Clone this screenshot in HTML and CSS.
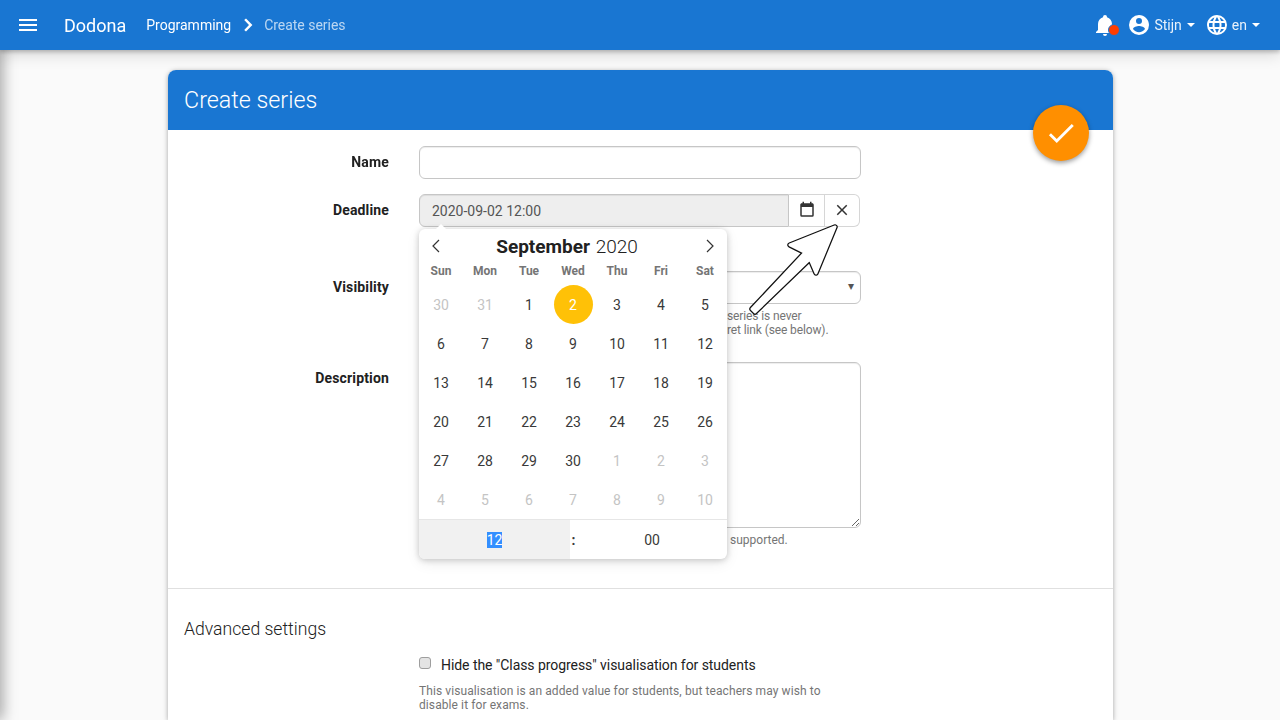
FILE: index.html
```html
<!DOCTYPE html>
<html lang="en">
<head>
  <meta charset="UTF-8">
  <title>Create series</title>
  <link rel="stylesheet" href="styles.css">
</head>
<body>

  <div class="drawer-edge"></div>

  <header class="navbar">
    <svg class="icon nav-menu" viewBox="0 0 24 24"><path d="M3,6H21V8H3V6M3,11H21V13H3V11M3,16H21V18H3V16Z"/></svg>
    <span class="brand">Dodona</span>
    <span class="crumb">Programming</span>
    <svg class="icon crumb-sep" viewBox="0 0 24 24"><path d="M8.2,16.9L13,12L8.2,7.1L10,5.6L16.4,12L10,18.4L8.2,16.9Z"/></svg>
    <span class="crumb crumb-active">Create series</span>

    <div class="nav-right">
      <div class="bell">
        <svg class="icon" viewBox="0 0 24 24"><path d="M21,19V20H3V19L5,17V11C5,7.9 7.03,5.17 10,4.29C10,4.19 10,4.1 10,4A2,2 0 0,1 12,2A2,2 0 0,1 14,4C14,4.1 14,4.19 14,4.29C16.97,5.17 19,7.9 19,11V17L21,19M14,21A2,2 0 0,1 12,23A2,2 0 0,1 10,21"/></svg>
        <span class="bell-dot"></span>
      </div>
      <div class="nav-item">
        <svg class="icon" viewBox="0 0 24 24"><path d="M12,19.2C9.5,19.2 7.29,17.92 6,16C6.03,14 10,12.9 12,12.9C14,12.9 17.97,14 18,16C16.71,17.92 14.5,19.2 12,19.2M12,5A3,3 0 0,1 15,8A3,3 0 0,1 12,11A3,3 0 0,1 9,8A3,3 0 0,1 12,5M12,2A10,10 0 0,0 2,12A10,10 0 0,0 12,22A10,10 0 0,0 22,12C22,6.47 17.5,2 12,2Z"/></svg>
        <span>Stijn</span><i class="caret"></i>
      </div>
      <div class="nav-item">
        <svg class="icon" viewBox="0 0 24 24"><path d="M16.36,14C16.44,13.34 16.5,12.68 16.5,12C16.5,11.32 16.44,10.66 16.36,10H19.74C19.9,10.64 20,11.31 20,12C20,12.69 19.9,13.36 19.74,14M14.59,19.56C15.19,18.45 15.65,17.25 15.97,16H18.92C17.96,17.65 16.43,18.93 14.59,19.56M14.34,14H9.66C9.56,13.34 9.5,12.68 9.5,12C9.5,11.32 9.56,10.65 9.66,10H14.34C14.43,10.65 14.5,11.32 14.5,12C14.5,12.68 14.43,13.34 14.34,14M12,19.96C11.17,18.76 10.5,17.43 10.09,16H13.91C13.5,17.43 12.83,18.76 12,19.96M8,8H5.08C6.03,6.34 7.57,5.06 9.4,4.44C8.8,5.55 8.35,6.75 8,8M5.08,16H8C8.35,17.25 8.8,18.45 9.4,19.56C7.57,18.93 6.03,17.65 5.08,16M4.26,14C4.1,13.36 4,12.69 4,12C4,11.31 4.1,10.64 4.26,10H7.64C7.56,10.66 7.5,11.32 7.5,12C7.5,12.68 7.56,13.34 7.64,14M12,4.03C12.83,5.23 13.5,6.57 13.91,8H10.09C10.5,6.57 11.17,5.23 12,4.03M18.92,8H15.97C15.65,6.75 15.19,5.55 14.59,4.44C16.43,5.07 17.96,6.34 18.92,8M12,2C6.47,2 2,6.5 2,12A10,10 0 0,0 12,22A10,10 0 0,0 22,12A10,10 0 0,0 12,2Z"/></svg>
        <span>en</span><i class="caret"></i>
      </div>
    </div>
  </header>

  <main class="card">
    <div class="card-title">
      <h1>Create series</h1>
      <button class="fab" type="button">
        <svg class="icon" viewBox="0 0 24 24"><path d="M21,7L9,19L3.5,13.5L4.91,12.09L9,16.17L19.59,5.59L21,7Z"/></svg>
      </button>
    </div>

    <form class="form">
      <div class="row row-name">
        <label>Name</label>
        <input class="control" type="text">
      </div>

      <div class="row row-deadline">
        <label>Deadline</label>
        <div class="input-group">
          <input class="control date-input" type="text" value="2020-09-02 12:00" readonly>
          <button class="group-btn" type="button">
            <svg class="icon" viewBox="0 0 24 24"><path d="M19,19H5V8H19M16,1V3H8V1H6V3H5C3.89,3 3,3.89 3,5V19A2,2 0 0,0 5,21H19A2,2 0 0,0 21,19V5C21,3.89 20.1,3 19,3H18V1"/></svg>
          </button>
          <button class="group-btn" type="button">
            <svg class="icon" viewBox="0 0 24 24"><path d="M19,6.41L17.59,5L12,10.59L6.41,5L5,6.41L10.59,12L5,17.59L6.41,19L12,13.41L17.59,19L19,17.59L13.41,12L19,6.41Z"/></svg>
          </button>
        </div>

        <div class="calendar">
          <div class="cal-month">
            <svg class="cal-nav" viewBox="0 0 10 16"><path d="M8 2 2 8l6 6"/></svg>
            <div class="cal-title"><b>September</b> <span>2020</span></div>
            <svg class="cal-nav" viewBox="0 0 10 16"><path d="M2 2l6 6-6 6"/></svg>
          </div>
          <div class="cal-week">
            <span>Sun</span><span>Mon</span><span>Tue</span><span>Wed</span><span>Thu</span><span>Fri</span><span>Sat</span>
          </div>
          <div class="cal-days">
            <span class="off">30</span><span class="off">31</span><span>1</span><span class="picked">2</span><span>3</span><span>4</span><span>5</span>
            <span>6</span><span>7</span><span>8</span><span>9</span><span>10</span><span>11</span><span>12</span>
            <span>13</span><span>14</span><span>15</span><span>16</span><span>17</span><span>18</span><span>19</span>
            <span>20</span><span>21</span><span>22</span><span>23</span><span>24</span><span>25</span><span>26</span>
            <span>27</span><span>28</span><span>29</span><span>30</span><span class="off">1</span><span class="off">2</span><span class="off">3</span>
            <span class="off">4</span><span class="off">5</span><span class="off">6</span><span class="off">7</span><span class="off">8</span><span class="off">9</span><span class="off">10</span>
          </div>
          <div class="cal-time">
            <div class="time-hour"><span class="selected">12</span></div>
            <div class="time-sep">:</div>
            <div class="time-min">00</div>
          </div>
        </div>
      </div>

      <div class="row row-visibility">
        <label>Visibility</label>
        <div class="field">
          <div class="control select-box"><span class="select-arrow">▾</span></div>
          <p class="help help-covered">series is never<br>ret link (see below).</p>
        </div>
      </div>

      <div class="row row-description">
        <label>Description</label>
        <div class="field">
          <textarea class="control description"></textarea>
          <p class="help help-supported">supported.</p>
        </div>
      </div>

      <hr class="divider">

      <h2>Advanced settings</h2>

      <div class="row">
        <span class="row-spacer"></span>
        <div class="field">
          <label class="check-label"><input type="checkbox">Hide the "Class progress" visualisation for students</label>
          <p class="help help-check">This visualisation is an added value for students, but teachers may wish to disable it for exams.</p>
        </div>
      </div>
    </form>
  </main>

  <svg class="pointer" viewBox="0 0 100 100">
    <polygon class="pointer-edge" points="87,5 42,23 57,30.5 4,87 7,90 62,37 68,51"/>
    <polygon class="pointer-fill" points="87,5 42,23 57,30.5 4,87 7,90 62,37 68,51"/>
  </svg>

</body>
</html>
```

FILE: styles.css
```css
* {
  box-sizing: border-box;
}

html, body {
  height: 720px;
  overflow: hidden;
}

body {
  margin: 0;
  background: #fafafa;
  color: #212121;
  font-family: Roboto, Arial, sans-serif;
  font-size: 14px;
}

.icon {
  display: block;
  fill: currentColor;
}

.drawer-edge {
  position: fixed;
  top: 0;
  left: -10px;
  width: 10px;
  height: 720px;
  box-shadow: 0 0 16px rgba(0,0,0,0.55);
}

.navbar {
  position: relative;
  display: flex;
  align-items: center;
  height: 50px;
  padding: 0 20px 0 16px;
  background: #1976d2;
  color: white;
  box-shadow: 0 2px 4px rgba(0,0,0,0.22), 0 4px 16px rgba(0,0,0,0.16);
}

.nav-menu {
  width: 24px;
  height: 24px;
}

.brand {
  margin-left: 24px;
  font-size: 18px;
}

.crumb {
  margin-left: 20px;
  font-size: 14px;
}

.crumb-sep {
  width: 24px;
  height: 24px;
  margin: 0 4px 0 5px;
}

.crumb-active {
  margin-left: 0;
  color: rgba(255,255,255,0.7);
  letter-spacing: -0.03px;
}

.nav-right {
  display: flex;
  align-items: center;
  margin-left: auto;
  gap: 10px;
}

.bell {
  position: relative;
}

.bell .icon {
  width: 24px;
  height: 24px;
}

.bell-dot {
  position: absolute;
  right: -3px;
  bottom: 1px;
  width: 12px;
  height: 12px;
  border-radius: 50%;
  background: #ff3d00;
  border: 1px solid #1976d2;
}

.nav-item {
  display: flex;
  align-items: center;
  color: rgba(255,255,255,0.9);
}

.nav-item .icon {
  width: 24px;
  height: 24px;
  margin-right: 3px;
  color: white;
}

.caret {
  width: 0;
  height: 0;
  margin-left: 5px;
  border: 4px solid transparent;
  border-top-color: white;
  border-bottom: 0;
}

.card {
  width: 945px;
  height: 650px;
  margin: 20px 0 0 168px;
  background: white;
  border-radius: 8px 8px 0 0;
  box-shadow: 0 1px 5px rgba(0,0,0,0.35);
}

.card-title {
  position: relative;
  height: 60px;
  padding: 0 16px;
  background: #1976d2;
  border-radius: 8px 8px 0 0;
  color: white;
}

h1 {
  margin: 0;
  font-size: 23.3px;
  font-weight: 300;
  line-height: 60px;
}

.fab {
  position: absolute;
  top: 35px;
  right: 24px;
  width: 56px;
  height: 56px;
  padding: 11px;
  border: none;
  border-radius: 50%;
  background: #ff8f00;
  color: white;
  box-shadow: 0 2px 5px rgba(0,0,0,0.4);
}

.fab .icon {
  width: 34px;
  height: 34px;
}

.form {
  padding-top: 16px;
}

.row {
  position: relative;
  display: flex;
}

.row > label, .row-spacer {
  flex: none;
  width: 221px;
  margin-right: 30px;
  padding-top: 8px;
  font-weight: 700;
  text-align: right;
  line-height: 17px;
  letter-spacing: 0.15px;
}

.row-deadline {
  margin-top: 15px;
}

.row-visibility {
  margin-top: 44px;
}

.row-description {
  margin-top: 25px;
}

.field {
  width: 442px;
}

.control {
  display: block;
  width: 442px;
  height: 33px;
  padding: 0 12px;
  border: 1px solid #c6c6c6;
  border-radius: 6px;
  background: white;
  color: #555;
  font-family: inherit;
  font-size: 14px;
  box-shadow: inset 0 1px 1px rgba(0,0,0,0.075);
}

.input-group {
  display: flex;
  width: 441px;
  height: 33px;
}

.date-input {
  flex: 1;
  width: auto;
  border-radius: 6px 0 0 6px;
  background: #eeeeee;
}

.group-btn {
  width: 36px;
  padding: 0;
  border: 1px solid #d6d6d6;
  border-left: none;
  background: white;
  color: #333;
}

.group-btn:last-child {
  width: 35px;
  border-radius: 0 6px 6px 0;
}

.group-btn .icon {
  width: 18px;
  height: 18px;
  margin: -2px auto 0;
}

.calendar {
  position: absolute;
  top: 35px;
  left: 251px;
  z-index: 2;
  width: 308px;
  background: white;
  border-radius: 6px;
  box-shadow: 0 1px 6px rgba(0,0,0,0.2), 0 4px 14px rgba(0,0,0,0.08);
}

.calendar::before {
  content: "";
  position: absolute;
  top: -5px;
  left: 17px;
  border: 5px solid transparent;
  border-top: 0;
  border-bottom-color: white;
}

.cal-month {
  display: flex;
  align-items: center;
  justify-content: space-between;
  height: 34px;
  padding: 0 12px;
}

.cal-nav {
  width: 10px;
  height: 16px;
  fill: none;
  stroke: #333;
  stroke-width: 1.2;
}

.cal-title {
  margin-right: 12px;
  font-size: 19px;
  color: #212121;
}

.cal-title b {
  font-weight: 700;
}

.cal-title span {
  margin-left: 1px;
  font-weight: 300;
}

.cal-week {
  display: grid;
  grid-template-columns: repeat(7, 44px);
  height: 16px;
  color: #757575;
  font-size: 12px;
  font-weight: 700;
  line-height: 16px;
  text-align: center;
}

.cal-days {
  display: grid;
  grid-template-columns: repeat(7, 44px);
  grid-auto-rows: 39px;
  padding-top: 6px;
  color: #393939;
  text-align: center;
}

.cal-days span {
  width: 39px;
  margin: 0 auto;
  line-height: 40px;
  border-radius: 50%;
}

.cal-days .off {
  color: #c4c4c4;
}

.cal-days .picked {
  background: #ffc107;
  color: white;
}

.cal-time {
  display: flex;
  height: 40px;
  border-top: 1px solid #e6e6e6;
  border-radius: 0 0 6px 6px;
  color: #393939;
  line-height: 40px;
  text-align: center;
}

.time-hour {
  width: 151px;
  background: #f1f1f1;
  border-radius: 0 0 0 6px;
}

.time-hour .selected {
  background: #338fff;
  color: white;
}

.time-sep {
  width: 7px;
  font-weight: 700;
}

.time-min {
  flex: 1;
}

.select-box {
  position: relative;
}

.select-arrow {
  position: absolute;
  top: 7px;
  right: 6px;
  font-size: 12px;
  color: #555;
}

.description {
  height: 166px;
}

.help {
  margin: 0;
  color: #757575;
  font-size: 12px;
  line-height: 14px;
}

.help-covered {
  padding: 5px 0 0 308px;
  letter-spacing: -0.12px;
}

.help-supported {
  padding: 5px 0 0 311px;
}

.divider {
  margin: 41px 0 0;
  border: none;
  border-top: 1px solid #e0e0e0;
}

h2 {
  margin: 29px 0 0 16px;
  font-size: 17.6px;
  font-weight: 300;
  line-height: 22px;
}

.check-label {
  display: flex;
  align-items: center;
  margin-top: 16px;
  font-size: 14px;
  line-height: 18px;
  letter-spacing: -0.06px;
}

.check-label input {
  flex: none;
  appearance: none;
  width: 12px;
  height: 12px;
  margin: -5px 10px 0 0;
  background: #e4e4e4;
  border: 1px solid #9e9e9e;
  border-radius: 3px;
}

.help-check {
  width: 420px;
  padding-top: 10px;
  letter-spacing: 0.09px;
}

.pointer {
  position: absolute;
  top: 222px;
  left: 748px;
  width: 100px;
  height: 100px;
  z-index: 3;
}

.pointer-edge {
  fill: #111;
  stroke: #111;
  stroke-width: 5.5;
  stroke-linejoin: round;
}

.pointer-fill {
  fill: white;
  stroke: white;
  stroke-width: 3;
  stroke-linejoin: round;
}
```
